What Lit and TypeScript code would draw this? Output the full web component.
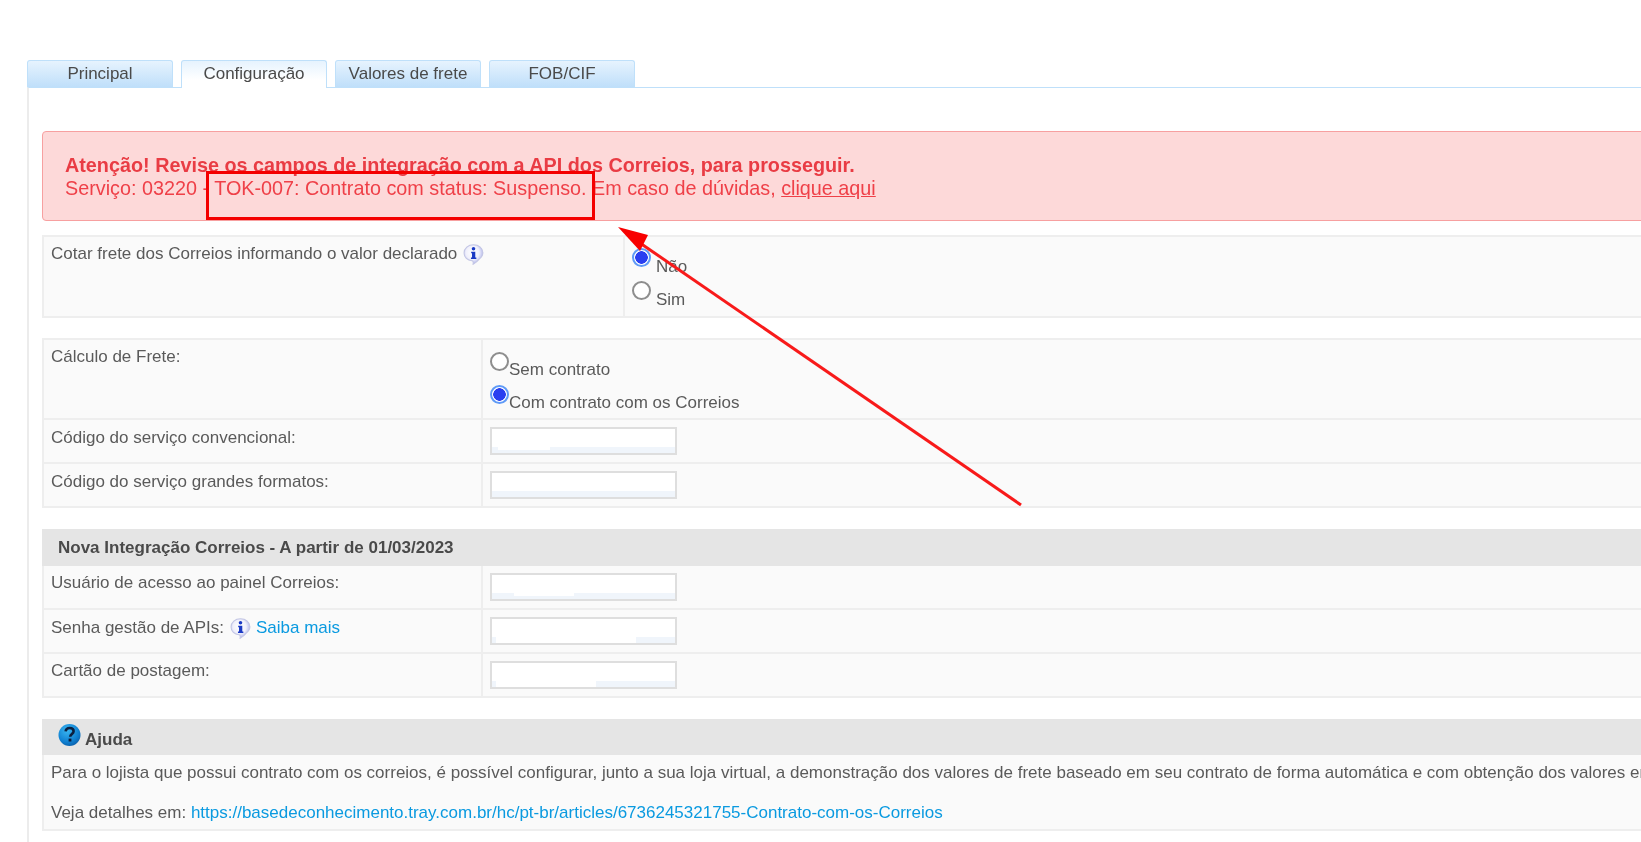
import { LitElement, html, css, svg } from "lit";
import { customElement } from "lit/decorators.js";

const infoIcon = (id: string) => html`<svg class="info" viewBox="0 0 20 20" width="21" height="21" aria-hidden="true">
  <defs><radialGradient id=${id} cx="45%" cy="40%" r="58%"><stop offset="0" stop-color="#ffffff"/><stop offset="0.6" stop-color="#f0f0fb"/><stop offset="1" stop-color="#aeb3ea"/></radialGradient></defs>
  <path d="M10 0.800C4.900 0.800 1 4.200 1 8.600c0 4 3.200 7 7.600 7.400 1 .1 1.300.9 1 3.400 2.600-1.500 4.400-3.200 5.800-5C17.600 12.800 19 11 19 8.400 19 4.100 15.100 .8 10 .8z" fill="url(#${id})" stroke="#c3c6e4" stroke-width="1"/>
  <circle cx="10" cy="4.600" r="1.700" fill="#1a39c4"/>
  <path d="M7.800 7.400h3.900v5.400h1v1.500H7.600v-1.500h1V8.900H7.800z" fill="#1a39c4"/>
</svg>`;

const helpIcon = html`<svg class="help" viewBox="0 0 23 24" width="23" height="24" aria-hidden="true">
  <defs><radialGradient id="hg" cx="40%" cy="30%" r="75%"><stop offset="0" stop-color="#39b6f2"/><stop offset="0.7" stop-color="#0f7fd0"/><stop offset="1" stop-color="#0a5ea8"/></radialGradient></defs>
  <circle cx="11.500" cy="12" r="11" fill="url(#hg)"/>
  <path d="M7.600 8.400c.3-2.300 2-3.400 4.100-3.400 2.300 0 3.900 1.300 3.900 3.200 0 2.700-3.300 2.800-3.400 5.600" fill="none" stroke="#0b1f3f" stroke-width="2.600"/>
  <rect x="10.600" y="15.600" width="2.800" height="2.900" fill="#0b1f3f"/>
</svg>`;

interface Patch { left: number; width: number; height: number; }

const field = (p: Patch) => html`<input class="field" type="text" aria-label="campo"
  style="background-size:${p.width}px ${p.height}px, 100% 6px; background-position:${p.left}px 18px, 0 100%;" />`;

@customElement("app-root")
export class AppRoot extends LitElement {
  static styles = css`
    :host {
      display: block;
      width: 1641px;
      height: 842px;
      overflow: hidden;
      position: relative;
      background: #fff;
      font-family: "Liberation Sans", Arial, sans-serif;
      font-size: 17px;
      line-height: 20px;
      color: #5a5a5a;
    }
    .page {
      width: 1760px;
      padding: 60px 0 0 27px;
      box-sizing: border-box;
      filter: blur(0.45px);
    }
    .tabs { display: flex; gap: 8px; height: 27px; }
    .tab {
      width: 146px;
      box-sizing: border-box;
      border: 1px solid #bfe0fa;
      border-bottom: 0;
      border-radius: 3px 3px 0 0;
      background: linear-gradient(#e6f3fe, #bfdffa);
      text-align: center;
      line-height: 25px;
      color: #4a4a4a;
    }
    .tab.active {
      background: linear-gradient(#e6f3fe, #ffffff 70%);
      height: 28px;
      position: relative;
    }
    .panel {
      border-top: 1px solid #bfe0fa;
      border-left: 2px solid #ececec;
      padding: 43px 0 0 13px;
      height: 760px;
      box-sizing: border-box;
    }
    .alert {
      height: 90px;
      box-sizing: border-box;
      background: #fdd9d9;
      border: 1px solid #f7a0a0;
      border-radius: 4px;
      padding: 22px 22px 0;
      font-size: 19.800px;
      line-height: 23px;
      color: #ef4048;
      margin-bottom: 14px;
    }
    .alert strong { display: block; color: #e93c44; }
    .alert a { color: inherit; text-decoration: underline; }
    .table {
      border: 2px solid #eeeeee;
      border-bottom: 0;
      background: #fafafa;
      margin-bottom: 21px;
    }
    .table.first { margin-bottom: 20px; }
    .row {
      display: grid;
      grid-template-columns: 437px 1fr;
      border-bottom: 2px solid #eeeeee;
    }
    .row.wide { grid-template-columns: 579px 1fr; }
    .label { padding: 7px 7px 0; display: flex; align-items: flex-start; gap: 6px; }
    .row.nudge .label { padding-top: 8px; }
    .label .info + a { margin-left: -1px; }
    .value { border-left: 2px solid #eeeeee; padding: 7px 7px 7px; }
    .value.radio-cell { padding: 11px 7px 3px; }
    .value.radio-cell.low { padding: 12px 7px 1px; }
    .radios { display: flex; flex-direction: column; }
    .radio { display: flex; align-items: flex-start; height: 32.500px; }
    .radio input {
      appearance: none;
      margin: 0;
      width: 19px;
      height: 19px;
      box-sizing: border-box;
      border-radius: 50%;
      border: 2px solid #8e8e8e;
      background: #fff;
      flex: none;
    }
    .radio input:checked {
      border-color: #5f9af7;
      background: radial-gradient(circle, #2a3ff0 0 6px, #fff 6.500px);
    }
    .radio span { margin-top: 8px; white-space: nowrap; }
    .radios.spaced .radio span { margin-left: 5px; margin-top: 9px; }
    .field {
      display: block;
      width: 187px;
      height: 28px;
      box-sizing: border-box;
      border: 2px solid #dedede;
      padding: 0;
      background-color: #fff;
      background-image: linear-gradient(#fff, #fff), linear-gradient(#f0f5fb, #f0f5fb);
      background-repeat: no-repeat;
    }
    .head {
      background: #e5e5e5;
      height: 37px;
      padding: 0 16px;
      display: flex;
      align-items: center;
      font-weight: bold;
      color: #4a4a4a;
      margin: -2px -2px 0;
    }
    .head.help-head { align-items: flex-start; height: 36px; gap: 4px; }
    .head.help-head svg { margin-top: 4px; }
    .head.help-head span { margin-top: 11px; }
    a { color: #0a9ae0; text-decoration: none; }
    .help-body {
      padding: 8px 7px 6px;
      white-space: nowrap;
      border-bottom: 2px solid #eeeeee;
    }
    .info { flex: none; }
    .overlay {
      position: absolute;
      left: 0;
      top: 0;
      width: 1641px;
      height: 842px;
      pointer-events: none;
    }
  `;

  render() {
    return html`
      <div class="page">
        <nav class="tabs">
          <div class="tab">Principal</div>
          <div class="tab active">Configuração</div>
          <div class="tab">Valores de frete</div>
          <div class="tab">FOB/CIF</div>
        </nav>
        <section class="panel">
          <div class="alert">
            <strong>Atenção! Revise os campos de integração com a API dos Correios, para prosseguir.</strong>
            Serviço: 03220 - TOK-007: Contrato com status: Suspenso. Em caso de dúvidas, <a href="#">clique aqui</a>
          </div>

          <div class="table first">
            <div class="row wide">
              <div class="label">Cotar frete dos Correios informando o valor declarado ${infoIcon("i1")}</div>
              <div class="value radio-cell">
                <div class="radios spaced">
                  <label class="radio"><input type="radio" name="vd" checked /><span>Não</span></label>
                  <label class="radio"><input type="radio" name="vd" /><span>Sim</span></label>
                </div>
              </div>
            </div>
          </div>

          <div class="table">
            <div class="row">
              <div class="label">Cálculo de Frete:</div>
              <div class="value radio-cell low">
                <div class="radios">
                  <label class="radio"><input type="radio" name="cf" /><span>Sem contrato</span></label>
                  <label class="radio"><input type="radio" name="cf" checked /><span>Com contrato com os Correios</span></label>
                </div>
              </div>
            </div>
            <div class="row nudge">
              <div class="label">Código do serviço convencional:</div>
              <div class="value">${field({ left: 6, width: 52, height: 3 })}</div>
            </div>
            <div class="row nudge">
              <div class="label">Código do serviço grandes formatos:</div>
              <div class="value">${field({ left: 0, width: 0, height: 0 })}</div>
            </div>
          </div>

          <div class="table">
            <div class="head">Nova Integração Correios - A partir de 01/03/2023</div>
            <div class="row">
              <div class="label">Usuário de acesso ao painel Correios:</div>
              <div class="value">${field({ left: 22, width: 60, height: 3 })}</div>
            </div>
            <div class="row nudge">
              <div class="label">Senha gestão de APIs: ${infoIcon("i2")}<a href="#">Saiba mais</a></div>
              <div class="value">${field({ left: 4, width: 140, height: 6 })}</div>
            </div>
            <div class="row">
              <div class="label">Cartão de postagem:</div>
              <div class="value">${field({ left: 4, width: 100, height: 6 })}</div>
            </div>
          </div>

          <div class="table">
            <div class="head help-head">${helpIcon}<span>Ajuda</span></div>
            <div class="help-body">
              Para o lojista que possui contrato com os correios, é possível configurar, junto a sua loja virtual, a demonstração dos valores de frete baseado em seu contrato de forma automática e com obtenção dos valores em tempo real.<br /><br />
              Veja detalhes em: <a href="#">https://basedeconhecimento.tray.com.br/hc/pt-br/articles/6736245321755-Contrato-com-os-Correios</a>
            </div>
          </div>
        </section>
      </div>
      <svg class="overlay" viewBox="0 0 1641 842" aria-hidden="true">
        ${svg`
          <rect x="207.500" y="172.500" width="386" height="46" fill="none" stroke="#f40000" stroke-width="3"/>
          <line x1="1021" y1="505" x2="640" y2="243" stroke="#f81a1a" stroke-width="3"/>
          <polygon points="618,227 648,235 640,251" fill="#f80000"/>
        `}
      </svg>
    `;
  }
}
